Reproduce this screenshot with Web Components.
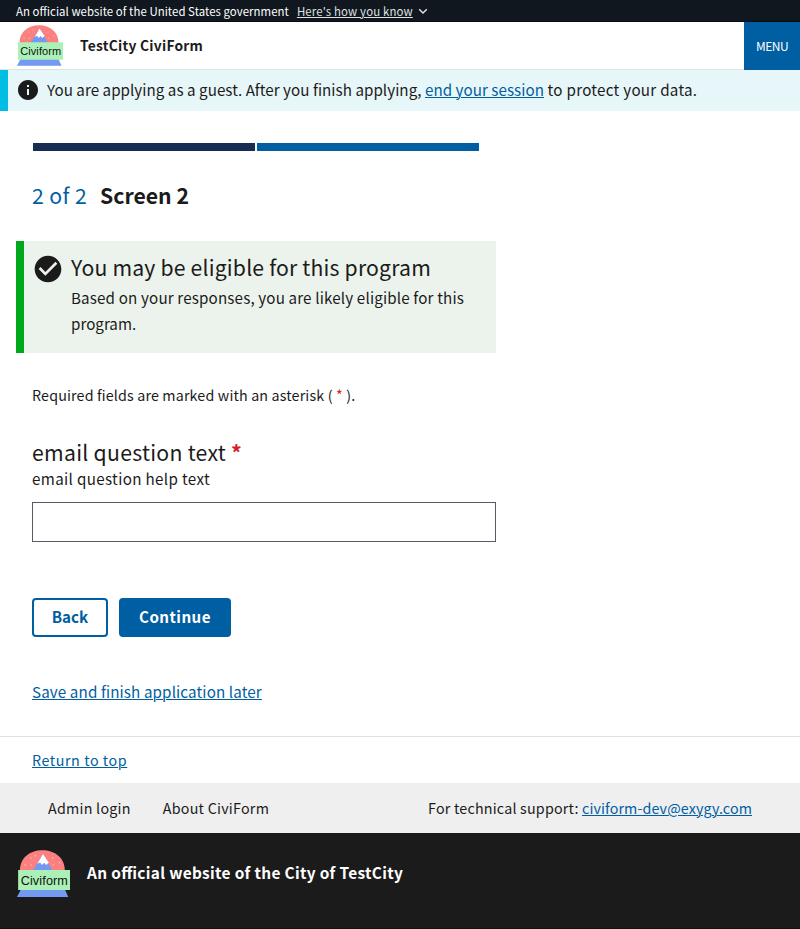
<!DOCTYPE html>
<html lang="en"><head><meta charset="utf-8"><title>Screen 2</title>
<style>
body{margin:0;background:#fff;color:#1b1b1b;font-family:"Noto Sans CJK SC","Noto Sans",sans-serif;font-size:15.18px;line-height:26px;font-feature-settings:"liga" 1}
</style></head><body>
<civi-page></civi-page>
<script>
const define=(name,css,html)=>customElements.define(name,class extends HTMLElement{
  constructor(){super();this.attachShadow({mode:'open'}).innerHTML=`<style>*{box-sizing:border-box}:host{display:block;box-sizing:border-box}a{color:#005ea2;text-decoration:underline;text-underline-offset:1px;text-decoration-thickness:1px}span,a{white-space:nowrap}svg{display:block;flex:none}${css}</style>${html}`}
});
define('civi-logo',':host{flex:none;width:46px}svg{width:100%}text{font-family:"Liberation Sans",Arial,sans-serif;font-size:11px;font-weight:400;letter-spacing:0;fill:#111}',
`<svg viewBox="0 0 46 41"><path d="M2.5 18C2.5 7 11 .3 22 .3s19.5 6.7 19.5 17.7z" fill="#fc8080"/><path d="M13.5 18 22.5 3.5 31 18z" fill="#7399f3"/><path d="M22.5 3.5 17.7 12l2.4-1.2 1.6 2.2 2-2 1.6 2 2.3-2z" fill="#fff"/><g fill="#ffc6c6"><circle cx="12" cy="7" r=".6"/><circle cx="16" cy="5" r=".6"/><circle cx="7" cy="13" r=".6"/><circle cx="12.5" cy="13" r=".6"/><circle cx="31" cy="7" r=".6"/><circle cx="31.5" cy="13" r=".6"/><circle cx="37" cy="11" r=".6"/></g><path d="M3.5 34h38L44.5 40.8H0z" fill="#7399f3"/><path d="M1 17.3h45v17.4H1z" fill="#abf1b7"/><text x="3.2" y="30" textLength="41">Civiform</text></svg>`);
define('gov-banner',':host{height:22px;background:#10171e;border-bottom:1px solid #060b11;color:#fff;display:flex;align-items:center;gap:8px;padding-left:16px;font-size:11.4px;line-height:20px;letter-spacing:.054px}a{color:#dfe1e2;letter-spacing:.16px}.l{display:flex;align-items:center;gap:5px}svg{margin-top:1px}',
`<span>An official website of the United States government</span><div class="l"><a>Here's how you know</a><svg width="10" height="10" viewBox="0 0 10 10"><path d="M1.2 3.2 5 7l3.8-3.8" fill="none" stroke="#dfe1e2" stroke-width="1.5"/></svg></div>`);
define('site-header',':host{height:48px;display:flex;justify-content:space-between;border-bottom:1px solid #dfe1e2}.brand{display:flex;align-items:center;gap:17px;padding-left:17px;font-weight:700;font-size:13.8px;letter-spacing:.24px}.brand span{padding-bottom:2px}civi-logo{margin-top:-1px}button{width:56px;height:48px;border:0;padding:0;background:#005ea2;color:#fff;font:400 12px/48px "Noto Sans CJK SC",sans-serif;letter-spacing:-.5px}',
`<div class="brand"><civi-logo></civi-logo><span>TestCity CiviForm</span></div><button><span>MENU</span></button>`);
define('guest-alert',':host{height:41px;background:#e7f6f8;border-left:8px solid #00bde3;display:flex;align-items:center;gap:7px;padding:0 0 2px 8px}.m{padding-bottom:2px;letter-spacing:.04px}.e{letter-spacing:.27px}',
`<svg width="24" height="24" viewBox="0 0 24 24"><path fill="#1b1b1b" d="M12 2C6.48 2 2 6.48 2 12s4.48 10 10 10 10-4.48 10-10S17.52 2 12 2zm1 15h-2v-6h2v6zm0-8h-2V7h2v2z"/></svg><div class="m"><span>You are applying as a guest. After you finish applying,&nbsp;</span><a>end your session</a><span class="e">&nbsp;to protect your data.</span></div>`);
define('step-progress',':host{padding:0 1px;display:grid;grid-template-columns:222px 222px;gap:2px;height:8px}i{background:#162e51}i+i{background:#005ea2}','<i></i><i></i>');
define('step-heading',':host{display:flex;gap:13px;font-size:21.2px;line-height:32px;margin-top:28px}b{white-space:nowrap}.n{color:#005ea2;letter-spacing:.38px}','<span class="n">2 of 2</span><b>Screen 2</b>');
define('eligible-alert',':host{width:480px;height:112px;margin:30px 0 0 -16px;background:#ecf3ec;border-left:8px solid #00a91c;display:flex;gap:7px;padding:10px 0 0 8px}svg{margin-top:2px}.h{font-size:21.2px;line-height:32px;letter-spacing:.18px}.b{line-height:26px;margin-top:1px;letter-spacing:.152px}.b span+br+span{letter-spacing:0}',
`<svg width="32" height="32" viewBox="0 0 24 24"><path fill="#1b1b1b" d="M12 2C6.48 2 2 6.48 2 12s4.48 10 10 10 10-4.48 10-10S17.52 2 12 2zm-2 15-5-5 1.41-1.41L10 14.17l7.59-7.59L19 8l-9 9z"/></svg><div><div class="h"><span>You may be eligible for this program</span></div><div class="b"><span>Based on your responses, you are likely eligible for this</span><br><span>program.</span></div></div>`);
define('required-note',':host{font-size:14.3px;line-height:26px;letter-spacing:.145px}em{color:#d81e2a;font-style:normal}','<span>Required fields are marked with an asterisk ( <em>*</em> ).</span>');
define('email-question',':host{width:464px}.q{font-size:21.2px;line-height:32px;letter-spacing:.285px}em{color:#d81e2a;font-style:normal}.h{line-height:20px;letter-spacing:.342px}.q em{font-weight:700}input{display:block;width:464px;height:40px;margin:14px 0 0;border:1px solid #565c65;border-radius:0;padding:8px;background:#fff}',
`<div class="q"><span>email question text&nbsp;</span><em>*</em></div><div class="h"><span>email question help text</span></div><input type="email">`);
define('form-actions',':host{display:flex;gap:11px}button{height:39px;border-radius:4px;padding:0 0 2px;border:2px solid #005ea2;background:#fff;color:#005ea2;width:76px;font:700 15.18px/33px "Noto Sans CJK SC",sans-serif}button+button{background:#005ea2;color:#fff;width:112px;letter-spacing:.451px}','<button><span>Back</span></button><button><span>Continue</span></button>');
define('page-footer','.top{height:47px;border-top:1px solid #dfe1e2;padding-left:32px;font-size:14.3px;line-height:46px;letter-spacing:.56px}.links{height:50px;background:#efefef;padding:0 48px;display:flex;justify-content:space-between;font-size:14.3px;line-height:50px;letter-spacing:.24px}.links div span{letter-spacing:.2px}.links a{letter-spacing:.111px}nav{display:flex;gap:32px}.id{height:96px;background:#1b1b1b;color:#fff;display:flex;align-items:flex-start;gap:17px;padding:16px 17px;border-bottom:1px solid #111}civi-logo{width:53px;margin-top:.5px}.id b{line-height:46px;white-space:nowrap;font-size:15.4px;letter-spacing:.33px}',
`<div class="top"><a>Return to top</a></div><div class="links"><nav><span>Admin login</span><span>About CiviForm</span></nav><div><span>For technical support:&nbsp;</span><a>civiform-dev@exygy.com</a></div></div><div class="id"><civi-logo></civi-logo><b>An official website of the City of TestCity</b></div>`);
define('civi-page','main{height:625px;padding:32px 32px 0}required-note{margin-top:29px}email-question{margin-top:28px}form-actions{margin-top:56px}.save{margin-top:41px;letter-spacing:.123px}',
`<gov-banner></gov-banner><site-header></site-header><guest-alert></guest-alert><main><step-progress></step-progress><step-heading></step-heading><eligible-alert></eligible-alert><required-note></required-note><email-question></email-question><form-actions></form-actions><div class="save"><a>Save and finish application later</a></div></main><page-footer></page-footer>`);
</script></body></html>
